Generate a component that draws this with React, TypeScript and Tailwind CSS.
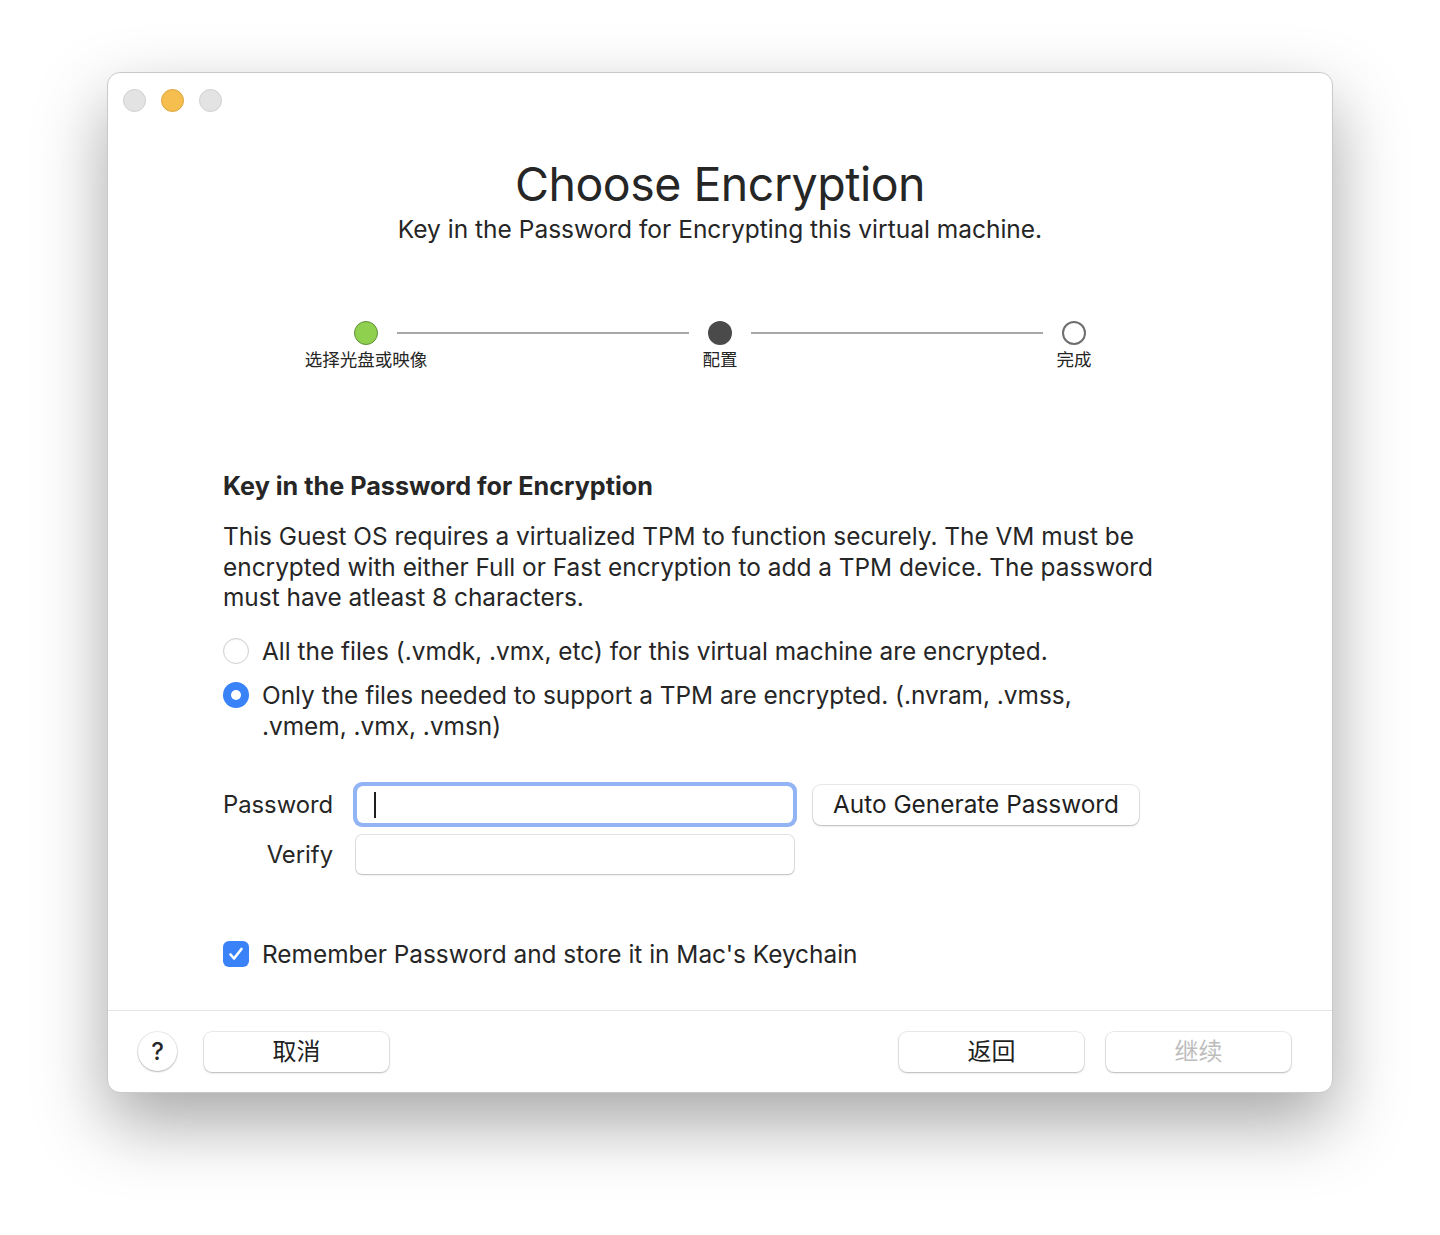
import { useState } from "react";

const font = { fontFamily: "Inter, 'Noto Sans CJK SC', sans-serif" };

function TrafficLights() {
  return (
    <div className="flex items-center gap-[15px] pl-[15px] pt-[16px]">
      <span className="h-[23px] w-[23px] rounded-full border border-[#cfcfcf] bg-[#e3e3e3]" />
      <span className="h-[23px] w-[23px] rounded-full border border-[#dda43c] bg-[#f5be4f]" />
      <span className="h-[23px] w-[23px] rounded-full border border-[#cfcfcf] bg-[#e3e3e3]" />
    </div>
  );
}

function Step({ dot, label }: { dot: string; label: string }) {
  return (
    <div className="flex w-[24px] flex-col items-center">
      <span className={`h-[24px] w-[24px] shrink-0 rounded-full ${dot}`} />
      <span className="mt-[2px] whitespace-nowrap text-[17.5px] leading-[25px] text-[#262626]">{label}</span>
    </div>
  );
}

function Stepper() {
  return (
    <div className="mx-auto flex w-[732px] items-start">
      <Step dot="border border-[#5f8f3a] bg-[#8fd14f]" label="选择光盘或映像" />
      <div className="mx-[19px] mt-[11px] h-[2px] w-[292px] bg-[#a8a8a8]" />
      <Step dot="bg-[#4a4a4a]" label="配置" />
      <div className="mx-[19px] mt-[11px] h-[2px] w-[292px] bg-[#a8a8a8]" />
      <Step dot="border-2 border-[#6e6e6e] bg-white" label="完成" />
    </div>
  );
}

function Radio({ checked }: { checked: boolean }) {
  return checked ? (
    <span className="mt-[2px] flex h-[26px] w-[26px] shrink-0 items-center justify-center rounded-full bg-[#3a82f7]">
      <span className="h-[10px] w-[10px] rounded-full bg-white" />
    </span>
  ) : (
    <span className="mt-[2px] h-[26px] w-[26px] shrink-0 rounded-full border border-[#cfcfcf] bg-white shadow-[inset_0_1px_1px_rgba(0,0,0,0.05)]" />
  );
}

function Button({ children, disabled, className }: { children: React.ReactNode; disabled?: boolean; className?: string }) {
  return (
    <button
      type="button"
      className={`flex h-[40px] items-center justify-center rounded-[8px] bg-white shadow-[0_0_0_1px_rgba(0,0,0,0.08),0_1px_2px_rgba(0,0,0,0.22)] ${
        disabled ? "text-[#bdbdbd] shadow-[0_0_0_1px_rgba(0,0,0,0.06)]" : "text-[#1f1f1f]"
      } ${className ?? ""}`}
    >
      {children}
    </button>
  );
}

export default function App() {
  const [mode, setMode] = useState<"all" | "tpm">("tpm");

  return (
    <div className="h-[1235px] w-[1440px] bg-white pl-[107px] pt-[72px]" style={font}>
      <div className="flex h-[1021px] w-[1226px] flex-col overflow-hidden rounded-[13px] border border-[#c9c9c9] bg-white shadow-[0_30px_70px_rgba(0,0,0,0.35)]">
        <TrafficLights />

        <div className="mt-[44px] text-center">
          <h1 className="text-[46.5px] leading-[56px] tracking-[-0.5px] text-[#262626]">Choose Encryption</h1>
          <p className="mt-[2px] text-[24.5px] leading-[30px] text-[#262626]">
            Key in the Password for Encrypting this virtual machine.
          </p>
        </div>

        <div className="mt-[77px]">
          <Stepper />
        </div>

        <div className="mt-[99px] pl-[115px] pr-[168px] text-[24.4px] text-[#262626]">
          <h2 className="text-[25.2px] font-bold leading-[30px]">Key in the Password for Encryption</h2>
          <p className="mt-[20px] leading-[30.5px]">
            This Guest OS requires a virtualized TPM to function securely. The VM must be encrypted with either Full or
            Fast encryption to add a TPM device. The password must have atleast 8 characters.
          </p>

          <div className="mt-[23px] flex flex-col gap-[14px] leading-[30.5px]">
            <label className="flex cursor-pointer items-start gap-[13px]" onClick={() => setMode("all")}>
              <Radio checked={mode === "all"} />
              <span>All the files (.vmdk, .vmx, etc) for this virtual machine are encrypted.</span>
            </label>
            <label className="flex cursor-pointer items-start gap-[13px]" onClick={() => setMode("tpm")}>
              <Radio checked={mode === "tpm"} />
              <span className="w-[830px]">
                Only the files needed to support a TPM are encrypted. (.nvram, .vmss, .vmem, .vmx, .vmsn)
              </span>
            </label>
          </div>

          <div className="mt-[41px] grid grid-cols-[110px_444px_auto] items-center gap-y-[8px]">
            <span className="whitespace-nowrap text-right text-[23.8px]">Password</span>
            <div className="ml-[20px] w-[444px] rounded-[9px] bg-[#93b4f4] p-[4px]">
              <div className="flex h-[37px] items-center rounded-[6px] bg-white pl-[17px]">
                <span className="h-[26px] w-[2px] bg-[#1f1f1f]" />
              </div>
            </div>
            <Button className="ml-[36px] w-[326px]">Auto Generate Password</Button>
            <span className="text-right text-[23.8px]">Verify</span>
            <div className="ml-[20px] w-[444px] px-[3px]">
              <div className="h-[39px] rounded-[6px] bg-white shadow-[0_0_0_1px_rgba(0,0,0,0.1),0_1px_2px_rgba(0,0,0,0.18)]" />
            </div>
            <span />
          </div>

          <label className="mt-[62px] flex items-center gap-[13px]">
            <span className="flex h-[26px] w-[26px] items-center justify-center rounded-[6px] bg-[#3a82f7]">
              <svg width="18" height="18" viewBox="0 0 18 18" fill="none">
                <path d="M3.5 9.5l3.5 4L14.5 4" stroke="white" strokeWidth="2.6" strokeLinecap="round" strokeLinejoin="round" />
              </svg>
            </span>
            <span>Remember Password and store it in Mac's Keychain</span>
          </label>
        </div>

        <div className="mt-auto border-t border-[#e4e4e4]">
          <div className="flex h-[81px] items-center pl-[30px] pr-[41px] text-[24px]">
            <button
              type="button"
              className="flex h-[39px] w-[39px] items-center justify-center rounded-full bg-white text-[24px] font-medium text-[#262626] shadow-[0_0_0_1px_rgba(0,0,0,0.08),0_1px_2px_rgba(0,0,0,0.22)]"
            >
              ?
            </button>
            <Button className="ml-[27px] w-[185px]">取消</Button>
            <div className="flex-1" />
            <Button className="w-[185px]">返回</Button>
            <Button disabled className="ml-[22px] w-[185px]">
              继续
            </Button>
          </div>
        </div>
      </div>
    </div>
  );
}
